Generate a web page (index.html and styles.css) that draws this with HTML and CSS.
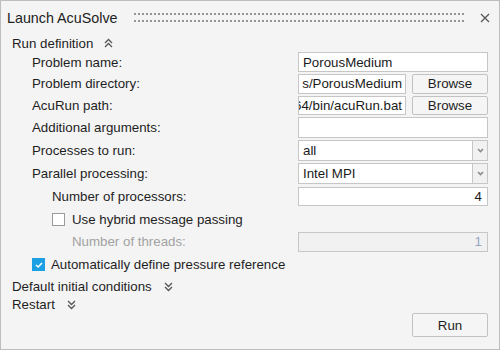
FILE: index.html
```html
<!DOCTYPE html>
<html lang="en">

<head>
    <meta charset="UTF-8">
    <title>Launch AcuSolve</title>
    <link rel="stylesheet" href="styles.css">
</head>

<body>
    <div class="dialog">
        <div class="titlebar">
            <span class="title">Launch AcuSolve</span>
            <span class="grip"></span>
            <svg class="close" width="10" height="10" viewBox="0 0 10 10">
                <path d="M1 1 L9 9 M9 1 L1 9" stroke="#555" stroke-width="1.2" fill="none" />
            </svg>
        </div>

        <!-- Run definition -->
        <div class="section">
            <span>Run definition</span>
            <svg class="chevron" width="9" height="10" viewBox="0 0 9 10">
                <path d="M1 5 L4.5 1.5 L8 5 M1 9 L4.5 5.5 L8 9" stroke="#555" stroke-width="1.3" fill="none" />
            </svg>
        </div>

        <div class="row">
            <label class="label">Problem name:</label>
            <div class="field"><div class="input">PorousMedium</div></div>
        </div>
        <div class="row">
            <label class="label">Problem directory:</label>
            <div class="field">
                <div class="input scrolled">s/PorousMedium</div>
                <button class="button">Browse</button>
            </div>
        </div>
        <div class="row">
            <label class="label">AcuRun path:</label>
            <div class="field">
                <div class="input scrolled">64/bin/acuRun.bat</div>
                <button class="button">Browse</button>
            </div>
        </div>
        <div class="row row-tall">
            <label class="label">Additional arguments:</label>
            <div class="field"><div class="input"></div></div>
        </div>
        <div class="row row-tall">
            <label class="label">Processes to run:</label>
            <div class="field">
                <div class="input combo">all</div>
                <div class="arrow"><svg width="7" height="5" viewBox="0 0 7 5"><path d="M1 1 L3.5 3.5 L6 1" stroke="#8a8a8a" stroke-width="1.6" fill="none" /></svg></div>
            </div>
        </div>
        <div class="row row-tall row-gap">
            <label class="label">Parallel processing:</label>
            <div class="field">
                <div class="input combo">Intel MPI</div>
                <div class="arrow"><svg width="7" height="5" viewBox="0 0 7 5"><path d="M1 1 L3.5 3.5 L6 1" stroke="#8a8a8a" stroke-width="1.6" fill="none" /></svg></div>
            </div>
        </div>
        <div class="row">
            <label class="label sub">Number of processors:</label>
            <div class="field"><div class="input number">4</div></div>
        </div>
        <div class="row check-row">
            <div class="label sub">
                <span class="checkbox"></span>
                <span>Use hybrid message passing</span>
            </div>
        </div>
        <div class="row">
            <label class="label subsub disabled">Number of threads:</label>
            <div class="field"><div class="input number off">1</div></div>
        </div>
        <div class="row check-row">
            <div class="label">
                <span class="checkbox checked">
                    <svg width="10" height="10" viewBox="0 0 10 10"><path d="M2 5 L4.2 7 L8 3" stroke="#fff" stroke-width="1.6" fill="none" /></svg>
                </span>
                <span>Automatically define pressure reference</span>
            </div>
        </div>

        <div class="section section-closed">
            <span>Default initial conditions</span>
            <svg class="chevron" width="9" height="10" viewBox="0 0 9 10">
                <path d="M1 1 L4.5 4.5 L8 1 M1 5 L4.5 8.5 L8 5" stroke="#555" stroke-width="1.3" fill="none" />
            </svg>
        </div>
        <div class="section section-closed">
            <span>Restart</span>
            <svg class="chevron" width="9" height="10" viewBox="0 0 9 10">
                <path d="M1 1 L4.5 4.5 L8 1 M1 5 L4.5 8.5 L8 5" stroke="#555" stroke-width="1.3" fill="none" />
            </svg>
        </div>

        <div class="footer">
            <button class="button run">Run</button>
        </div>
    </div>
</body>

</html>
```

FILE: styles.css
```css
body {
    margin: 0;
    padding: 0;
    font-family: "Liberation Sans", Arial, sans-serif;
    font-size: 13.3px;
    color: #1e1e1e;
}

.dialog {
    box-sizing: border-box;
    width: 500px;
    height: 350px;
    border: 1px solid #bdbdbd;
    background-color: #f4f4f4;
    display: flex;
    flex-direction: column;
}

.titlebar {
    height: 34px;
    display: flex;
    align-items: center;
    padding: 0 9px 0 6px;
}

.title {
    font-size: 14.3px;
    color: #222222;
    margin-right: 16px;
}

.grip {
    flex: 1;
    height: 9px;
    margin-top: -1px;
    margin-right: 14px;
    background-image: radial-gradient(circle at 1px 1px, #959595 1px, transparent 1.3px);
    background-size: 4px 7px;
}

.close {
    display: block;
}

.section {
    height: 18px;
    display: flex;
    align-items: center;
    padding-left: 11px;
}

.section .chevron {
    margin-left: 11px;
}

.section-closed .chevron {
    margin-left: 12px;
    margin-top: 1px;
}

.row {
    height: 20px;
    margin-bottom: 2px;
    display: flex;
    align-items: center;
}

.row-tall {
    height: 21px;
}

.row-gap {
    margin-bottom: 3px;
}

.label {
    flex: 1;
    padding-left: 31px;
    display: flex;
    align-items: center;
}

.label.sub {
    padding-left: 51px;
}

.label.subsub {
    padding-left: 71px;
}

.disabled {
    color: #a2a2a2;
}

.field {
    width: 190px;
    height: 100%;
    margin-right: 11px;
    display: flex;
    gap: 6px;
}

.input {
    flex: 1;
    box-sizing: border-box;
    height: 100%;
    background-color: #ffffff;
    border: 1px solid #c6c6c6;
    padding: 0 4px;
    display: flex;
    align-items: center;
    white-space: nowrap;
    overflow: hidden;
    color: #1a1a1a;
}

.input.scrolled {
    justify-content: flex-end;
    padding: 0 3px 0 0;
}

.input.number {
    justify-content: flex-end;
    padding-right: 5px;
}

.input.off {
    background-color: #f1f1f1;
    color: #94a6bd;
}

.input.combo {
    border-right: none;
}

.arrow {
    box-sizing: border-box;
    width: 16px;
    height: 100%;
    margin-left: -6px;
    border: 1px solid #c6c6c6;
    background-color: #f1f1f1;
    display: flex;
    align-items: center;
    justify-content: center;
}

.button {
    box-sizing: border-box;
    width: 76px;
    height: 100%;
    font-family: inherit;
    font-size: 13.3px;
    color: #1e1e1e;
    background-color: #f5f5f5;
    border: 1px solid #c2c2c2;
    border-radius: 2px;
    padding: 0;
}

.check-row {
    height: 22px;
}

.checkbox {
    box-sizing: border-box;
    width: 13px;
    height: 13px;
    border: 1px solid #9a9a9a;
    background-color: #ffffff;
    margin-right: 7px;
    display: flex;
    align-items: center;
    justify-content: center;
}

.checkbox.checked {
    border: none;
    background-color: #1c9fe3;
    margin-right: 6px;
}

.footer {
    flex: 1;
    display: flex;
    justify-content: flex-end;
    align-items: flex-end;
    padding: 0 11px 12px 0;
}

.button.run {
    height: 24px;
}
```
